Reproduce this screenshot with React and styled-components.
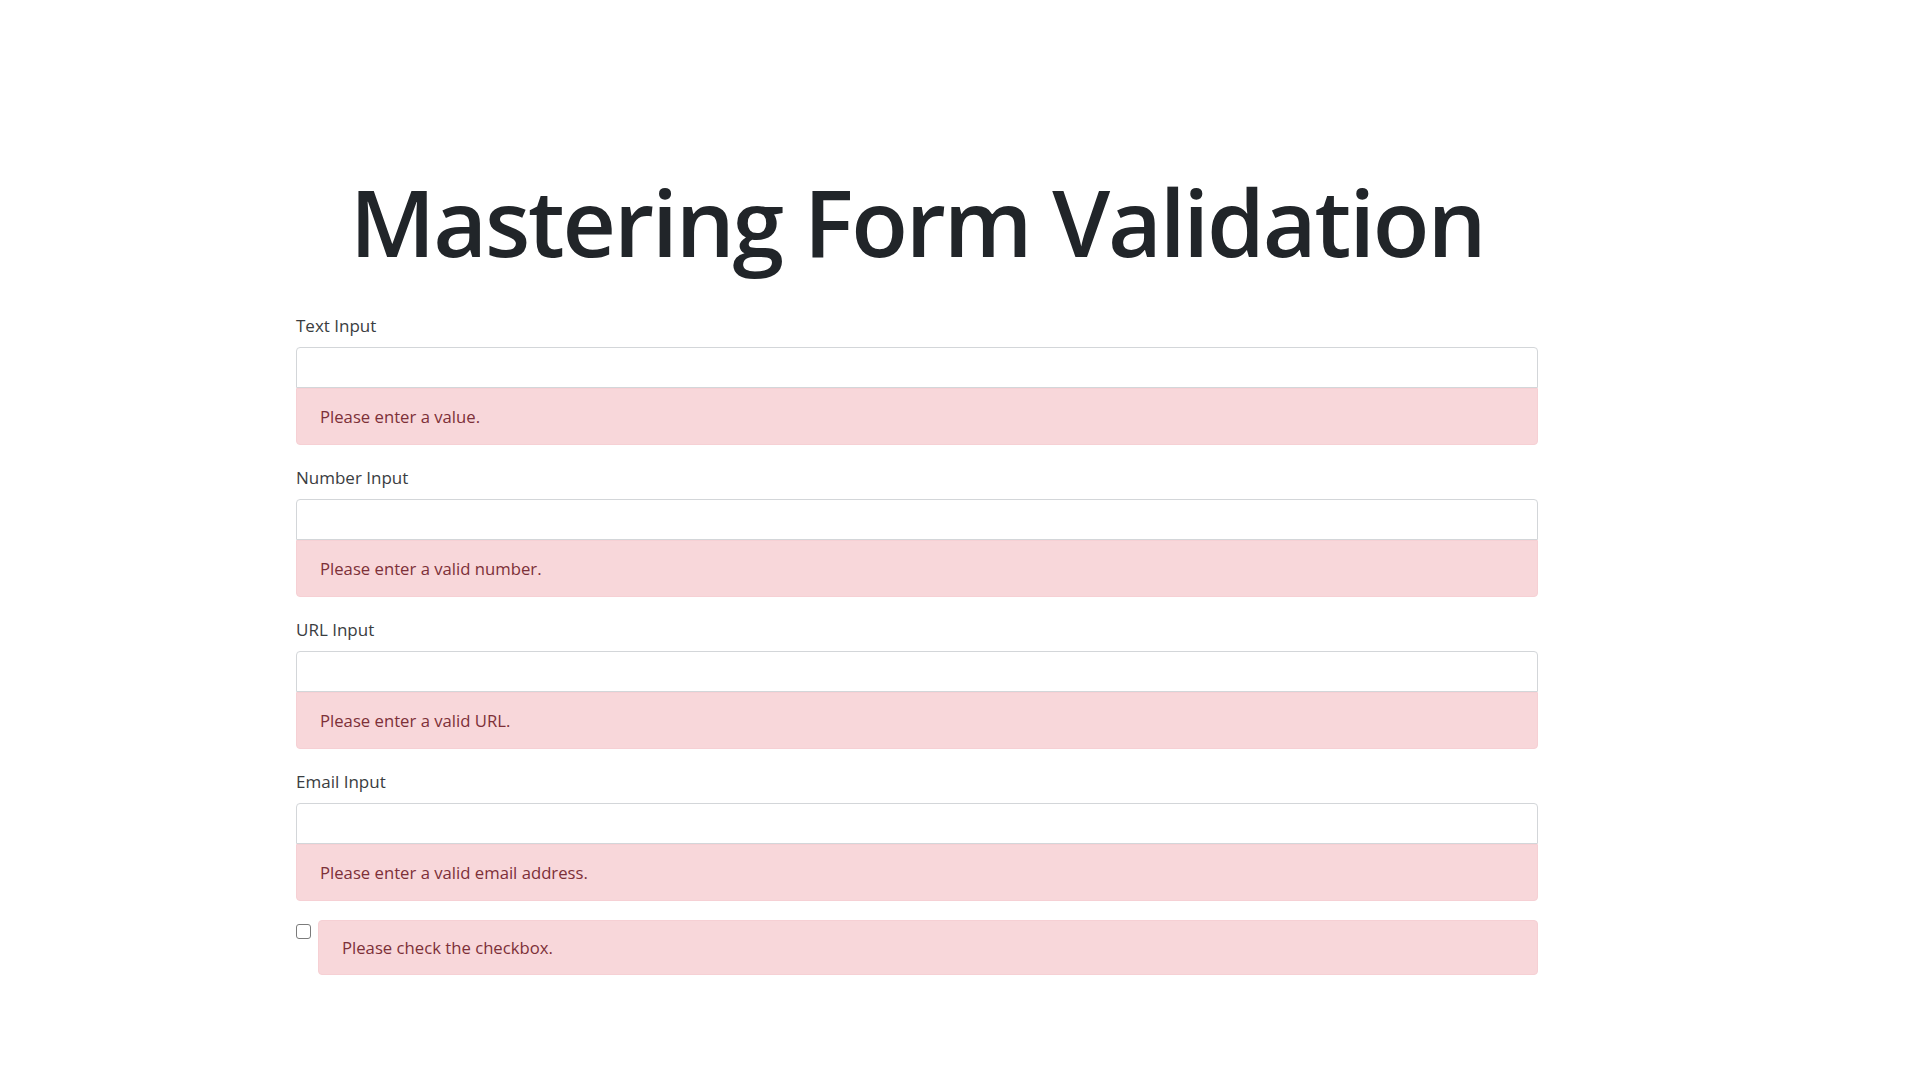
import styled, { createGlobalStyle } from 'styled-components';

const GlobalStyle = createGlobalStyle`
  html, body {
    margin: 0;
    padding: 0;
    background: #ffffff;
  }
  body {
    font-family: "Open Sans", "Noto Sans", Arial, sans-serif;
    color: #212529;
  }
`;

const Page = styled.div`
  padding: 164px 0 0 296px;
  min-height: 1080px;
  box-sizing: border-box;
`;

const Container = styled.div`
  width: 1242px;
`;

const Title = styled.h1`
  margin: 0 0 33px 0;
  font-size: 93px;
  line-height: 115px;
  font-weight: 600;
  letter-spacing: -2.2px;
  text-align: center;
  color: #212529;
`;

const Group = styled.div`
  margin-bottom: 19px;
`;

const Label = styled.label`
  display: block;
  margin-bottom: 8px;
  font-size: 17px;
  line-height: 27px;
  color: #3a3d41;
`;

const Input = styled.input`
  display: block;
  width: 100%;
  height: 41px;
  box-sizing: border-box;
  border: 1px solid #d3d6d9;
  border-radius: 4px 4px 0 0;
  background: #ffffff;
  padding: 6px 12px;
  font-size: 17px;
  outline: none;
`;

const ErrorBox = styled.div`
  flex: 1;
  box-sizing: border-box;
  height: ${(p) => (p.$tall ? 55 : 57)}px;
  display: flex;
  align-items: center;
  padding: 0 23px;
  background: #f8d7da;
  border: 1px solid #f6d0d4;
  border-radius: ${(p) => (p.$round ? '4px' : '0 0 4px 4px')};
  color: #7d3038;
  font-size: 16.7px;
`;

const CheckRow = styled.div`
  display: flex;
  align-items: flex-start;
  gap: 7px;
`;

const Check = styled.input`
  appearance: none;
  margin: 4px 0 0 0;
  width: 15px;
  height: 15px;
  border: 1px solid #7b7b7b;
  border-radius: 3px;
  background: #ffffff;
  box-sizing: border-box;
`;

const fields = [
  { label: 'Text Input', type: 'text', error: 'Please enter a value.' },
  { label: 'Number Input', type: 'number', error: 'Please enter a valid number.' },
  { label: 'URL Input', type: 'url', error: 'Please enter a valid URL.' },
  { label: 'Email Input', type: 'email', error: 'Please enter a valid email address.' },
];

export default function App() {
  return (
    <>
      <GlobalStyle />
      <Page>
        <Container>
          <Title>Mastering Form Validation</Title>
          {fields.map((f) => (
            <Group key={f.label}>
              <Label>{f.label}</Label>
              <Input type={f.type} />
              <ErrorBox>{f.error}</ErrorBox>
            </Group>
          ))}
          <CheckRow>
            <Check type="checkbox" />
            <ErrorBox $round $tall>Please check the checkbox.</ErrorBox>
          </CheckRow>
        </Container>
      </Page>
    </>
  );
}
